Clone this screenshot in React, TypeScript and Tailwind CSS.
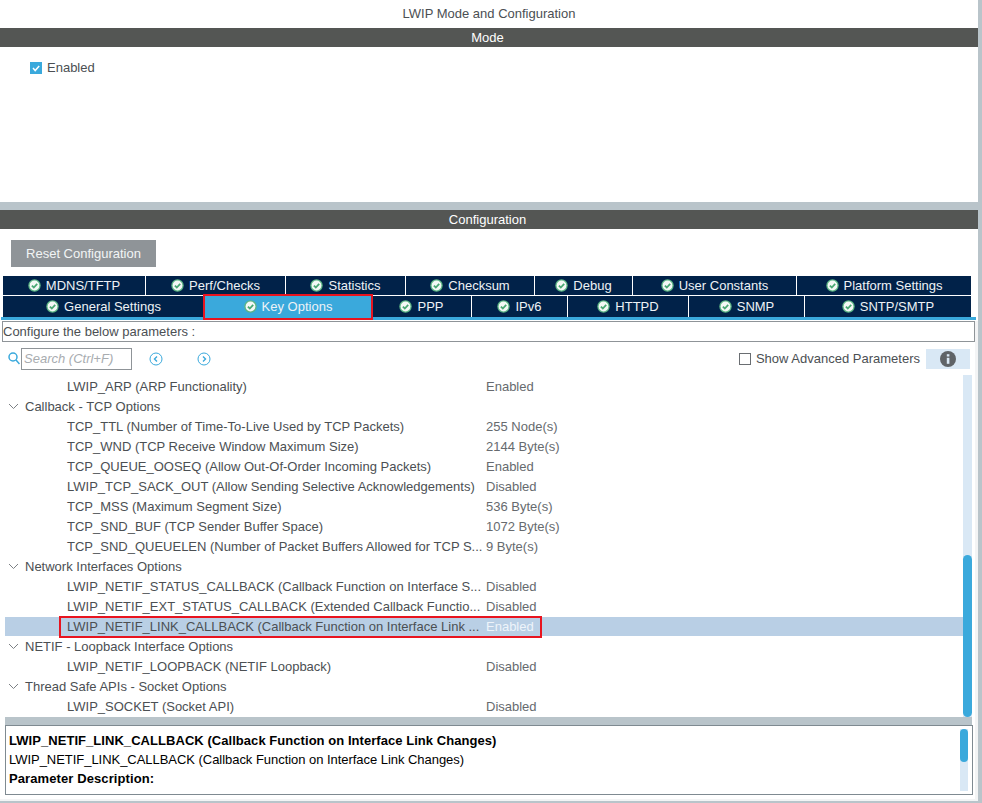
const Check = () => (
  <svg width="13" height="13" viewBox="0 0 13 13" className="shrink-0">
    <circle cx="6.5" cy="6.5" r="6.2" fill="#5cb585" />
    <circle cx="6.5" cy="6.5" r="4.9" fill="#f4f8f5" />
    <path d="M3.9 6.6 L5.8 8.5 L9.2 4.8" fill="none" stroke="#4aa873" strokeWidth="1.8" />
  </svg>
);

const Tab = ({ w, label, active }: { w: string; label: string; active?: boolean }) => (
  <div className={`${w} flex items-center justify-center gap-[5px] border-r border-white text-[#eef2f6] ${active ? "bg-[#3aa9dc]" : "bg-[#012249]"}`}>
    <Check />
    <span className="mt-px">{label}</span>
  </div>
);

const Row = ({ name, value, selected }: { name: string; value: string; selected?: boolean }) => (
  <div className="h-5 pt-px">
    <div className={`h-[19px] pt-px flex leading-[18px] ${selected ? "bg-[#b9cfe5]" : ""}`}>
      <span className="pl-[62px] w-[481px] whitespace-nowrap overflow-hidden">{name}</span>
      <span className={selected ? "text-[#eef4fa]" : "text-[#666a6e]"}>{value}</span>
    </div>
  </div>
);

const Group = ({ name }: { name: string }) => (
  <div className="h-5 pt-px">
    <div className="h-[19px] flex items-center leading-[18px]">
      <svg width="11" height="7" viewBox="0 0 11 7" className="ml-[3px] mr-[6px]">
        <path d="M1 1 L5.5 5.5 L10 1" fill="none" stroke="#7c8084" strokeWidth="1" />
      </svg>
      <span className="mt-px">{name}</span>
    </div>
  </div>
);

export default function App() {
  return (
    <div className="w-[982px] h-[803px] overflow-hidden bg-[#b9c4ca] text-[13px] leading-[18px] text-[#4b4f53] font-['Liberation_Sans',Arial,sans-serif]">
      <div className="w-[978px] h-[801px] bg-[#f3f4f5]">
        <div className="bg-white">
          <div className="h-[27px] flex items-center justify-center">LWIP Mode and Configuration</div>
          <div className="h-px" />
          <div className="h-[19px] bg-[#545654] text-white flex items-center justify-center pr-[3px]">Mode</div>
          <div className="h-[155px] pl-[30px] pt-[12px]">
            <div className="flex items-center gap-[5px]">
              <svg width="12" height="12" viewBox="0 0 12 12">
                <rect width="12" height="12" fill="#3aa9dc" />
                <path d="M3 6 L5.2 8.5 L9.2 4" fill="none" stroke="white" strokeWidth="1.5" />
              </svg>
              <span>Enabled</span>
            </div>
          </div>
          <div className="h-[8px] bg-[#b9c4ca]" />
          <div className="h-[19px] bg-[#545654] text-white flex items-center justify-center pr-[3px]">Configuration</div>
          <div className="h-[11px]" />
          <div className="ml-[11px] w-[145px] h-[27px] bg-[#8f9498] text-[#f2f4f5] flex items-center justify-center">Reset Configuration</div>
          <div className="h-[9px]" />
          <div className="ml-[3px] w-[969px] h-[19px] flex">
            <Tab w="w-[143px]" label="MDNS/TFTP" />
            <Tab w="w-[140px]" label="Perf/Checks" />
            <Tab w="w-[120px]" label="Statistics" />
            <Tab w="w-[129px]" label="Checksum" />
            <Tab w="w-[98px]" label="Debug" />
            <Tab w="w-[164px]" label="User Constants" />
            <Tab w="w-[175px]" label="Platform Settings" />
          </div>
          <div className="h-px" />
          <div className="ml-[3px] w-[969px] h-[21px] flex">
            <Tab w="w-[202px]" label="General Settings" />
            <div className="relative w-[167px] flex">
              <Tab w="w-[167px]" label="Key Options" active />
              <div className="absolute left-[-2px] right-[-1px] top-[-2px] bottom-[-3px] border-2 border-[#e8141f]" />
            </div>
            <Tab w="w-[100px]" label="PPP" />
            <Tab w="w-[96px]" label="IPv6" />
            <Tab w="w-[121px]" label="HTTPD" />
            <Tab w="w-[116px]" label="SNMP" />
            <Tab w="w-[167px]" label="SNTP/SMTP" />
          </div>
          <div className="ml-[1px] w-[975px] h-[3px] bg-[#3aa9dc]" />
          <div className="h-px" />
        </div>
        <div className="w-[975px] h-[478px] bg-white">
          <div className="ml-[2px] w-[973px] h-[21px] border border-[#8f9498] flex items-center">Configure the below parameters :</div>
          <div className="h-[33px] flex items-center pl-[8px]">
            <svg width="12" height="13" viewBox="0 0 12 13" fill="none" stroke="#3aa9dc" strokeWidth="1.5">
              <circle cx="5" cy="5" r="4" />
              <path d="M8 8 L11.5 12" />
            </svg>
            <div className="w-[111px] h-[22px] ml-px border border-[#8f9498] flex items-center pl-[2px] italic text-[#a8acb0]">Search (Ctrl+F)</div>
            <svg width="14" height="14" viewBox="0 0 14 14" fill="none" stroke="#3aa9dc" className="ml-[17px]">
              <circle cx="7" cy="7" r="6" />
              <path d="M8 4.5 L5.5 7 L8 9.5" strokeWidth="1.4" />
            </svg>
            <svg width="14" height="14" viewBox="0 0 14 14" fill="none" stroke="#3aa9dc" className="ml-[34px]">
              <circle cx="7" cy="7" r="6" />
              <path d="M6 4.5 L8.5 7 L6 9.5" strokeWidth="1.4" />
            </svg>
            <div className="ml-auto flex items-center mr-[5px]">
              <div className="w-[12px] h-[12px] border border-[#6a6e72] mr-[5px]" />
              <span className="mr-[6px]">Show Advanced Parameters</span>
              <div className="w-[44px] h-[20px] bg-[#d9e8f5] flex items-center justify-center">
                <svg width="16" height="16" viewBox="0 0 16 16">
                  <circle cx="8" cy="8" r="8" fill="#5f6367" />
                  <rect x="6.8" y="6.8" width="2.6" height="6" fill="#d9e8f5" />
                  <rect x="6.8" y="3.2" width="2.6" height="2.3" fill="#d9e8f5" />
                </svg>
              </div>
            </div>
          </div>
          <div className="h-[342px] flex ml-[5px] w-[967px]">
            <div className="w-[958px] pt-px">
              <Row name="LWIP_ARP (ARP Functionality)" value="Enabled" />
              <Group name="Callback - TCP Options" />
              <Row name="TCP_TTL (Number of Time-To-Live Used by TCP Packets)" value="255 Node(s)" />
              <Row name="TCP_WND (TCP Receive Window Maximum Size)" value="2144 Byte(s)" />
              <Row name="TCP_QUEUE_OOSEQ (Allow Out-Of-Order Incoming Packets)" value="Enabled" />
              <Row name="LWIP_TCP_SACK_OUT (Allow Sending Selective Acknowledgements)" value="Disabled" />
              <Row name="TCP_MSS (Maximum Segment Size)" value="536 Byte(s)" />
              <Row name="TCP_SND_BUF (TCP Sender Buffer Space)" value="1072 Byte(s)" />
              <Row name="TCP_SND_QUEUELEN (Number of Packet Buffers Allowed for TCP S..." value="9 Byte(s)" />
              <Group name="Network Interfaces Options" />
              <Row name="LWIP_NETIF_STATUS_CALLBACK (Callback Function on Interface S..." value="Disabled" />
              <Row name="LWIP_NETIF_EXT_STATUS_CALLBACK (Extended Callback Functio..." value="Disabled" />
              <div className="relative">
                <Row name="LWIP_NETIF_LINK_CALLBACK (Callback Function on Interface Link ..." value="Enabled" selected />
                <div className="absolute left-[54px] w-[483px] top-0 h-[22px] border-2 border-[#e8141f]" />
              </div>
              <Group name="NETIF - Loopback Interface Options" />
              <Row name="LWIP_NETIF_LOOPBACK (NETIF Loopback)" value="Disabled" />
              <Group name="Thread Safe APIs - Socket Options" />
              <Row name="LWIP_SOCKET (Socket API)" value="Disabled" />
            </div>
            <div className="w-[9px] bg-[#d9e8f5] flex flex-col justify-end">
              <div className="h-[162px] bg-[#3aa9dc] rounded-full" />
            </div>
          </div>
          <div className="h-[8px] ml-[5px] w-[967px] bg-[#b9c4ca]" />
          <div className="h-[70px] ml-[5px] w-[968px] border border-[#7f8a91] flex justify-between pl-[3px] pt-[7px] text-[#000]">
            <div className="flex flex-col gap-[4px] leading-[15px]">
              <div className="font-bold tracking-[0.05px]">LWIP_NETIF_LINK_CALLBACK (Callback Function on Interface Link Changes)</div>
              <div className="tracking-[-0.04px]">LWIP_NETIF_LINK_CALLBACK (Callback Function on Interface Link Changes)</div>
              <div className="font-bold tracking-[0.1px]">Parameter Description:</div>
            </div>
            <div className="w-[8px] h-[62px] mt-[-4px] mr-[4px] bg-[#d9e8f5]">
              <div className="h-[33px] bg-[#3aa9dc] rounded-full" />
            </div>
          </div>
        </div>
      </div>
    </div>
  );
}
